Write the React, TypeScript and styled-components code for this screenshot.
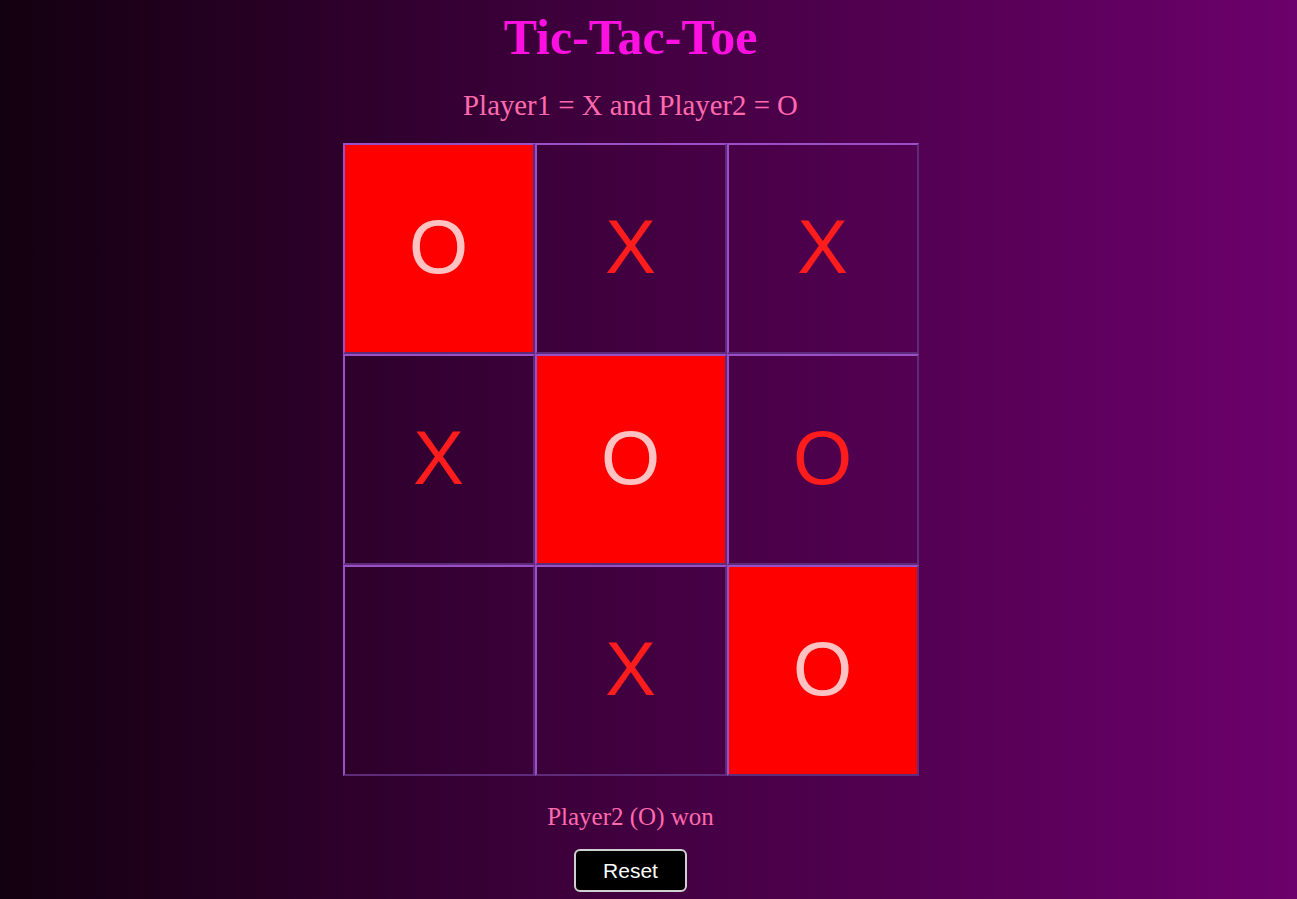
import * as React from "react";
import styled, { createGlobalStyle } from "styled-components";

type Mark = "X" | "O" | "";

const GlobalStyle = createGlobalStyle`
  html, body {
    margin: 0;
    padding: 0;
    min-height: 100%;
  }
  body {
    min-height: 899px;
    background: linear-gradient(to right, #130010 0%, #3a0038 40%, #6c006c 100%);
    font-family: "Liberation Serif", serif;
  }
`;

const Page = styled.main`
  width: 1261px;
  display: flex;
  flex-direction: column;
  align-items: center;
`;

const Title = styled.h1`
  margin: 9px 0 0;
  font-family: "Liberation Serif", serif;
  font-weight: bold;
  font-size: 50px;
  line-height: 57px;
  color: #ff10e2;
`;

const Subtitle = styled.p`
  margin: 23px 0 0;
  font-size: 28.8px;
  line-height: 33px;
  color: #ff6aae;
`;

const Board = styled.div`
  margin-top: 21px;
  display: grid;
  grid-template-columns: repeat(3, 192px);
  grid-template-rows: repeat(3, 211px);
`;

const Cell = styled.button<{ $win: boolean }>`
  box-sizing: border-box;
  margin: 0;
  padding: 0 0 4px;
  border: 2px solid;
  border-color: #9b4fc6 #5e2a7a #5e2a7a #9b4fc6;
  background: ${(p) => (p.$win ? "#ff0000" : "transparent")};
  color: ${(p) => (p.$win ? "#ffc2c2" : "#ff1c1c")};
  font-family: "Liberation Sans", Arial, sans-serif;
  font-size: 76px;
  display: flex;
  align-items: center;
  justify-content: center;
  cursor: pointer;
`;

const Status = styled.p`
  margin: 26px 0 0;
  font-size: 25px;
  line-height: 29px;
  color: #ff6aae;
`;

const ResetButton = styled.button`
  margin-top: 18px;
  box-sizing: border-box;
  width: 113px;
  height: 43px;
  background: #000;
  color: #fff;
  border: 2px solid #cfcfcf;
  border-radius: 6px;
  font-family: "Liberation Sans", Arial, sans-serif;
  font-size: 21px;
  cursor: pointer;
`;

const initial: Mark[] = ["O", "X", "X", "X", "O", "O", "", "X", "O"];
const winLine = [0, 4, 8];

export default function App() {
  const [cells, setCells] = React.useState<Mark[]>(initial);

  return (
    <>
      <GlobalStyle />
      <Page>
        <Title>Tic-Tac-Toe</Title>
        <Subtitle>Player1 = X and Player2 = O</Subtitle>
        <Board>
          {cells.map((c, i) => (
            <Cell key={i} $win={winLine.includes(i)}>
              {c}
            </Cell>
          ))}
        </Board>
        <Status>Player2 (O) won</Status>
        <ResetButton onClick={() => setCells(Array(9).fill(""))}>Reset</ResetButton>
      </Page>
    </>
  );
}
